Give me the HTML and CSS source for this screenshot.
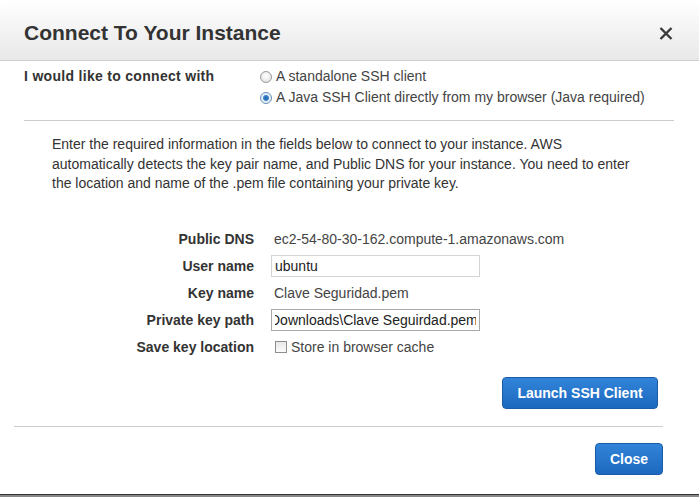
FILE: index.html
```html
<!DOCTYPE html>
<html lang="en">
<head>
    <meta charset="UTF-8">
    <meta name="viewport" content="width=device-width, initial-scale=1.0">
    <title>Connect To Your Instance</title>
    <link rel="stylesheet" href="styles.css">
</head>
<body>
    <div class="modal">
        <div class="modal-header">
            <h1>Connect To Your Instance</h1>
            <button class="close-x" type="button" aria-label="Close">
                <svg width="14" height="13" viewBox="0 0 14 13">
                    <path d="M1.5 1 L12.5 12 M12.5 1 L1.5 12" stroke="#3a3a3a" stroke-width="2.4" fill="none"/>
                </svg>
            </button>
        </div>

        <div class="modal-body">
            <div class="connect-row">
                <div class="connect-label">I would like to connect with</div>
                <div class="connect-options">
                    <label class="radio-line"><input type="radio" name="client"> A standalone SSH client</label>
                    <label class="radio-line"><input type="radio" name="client" checked> A Java SSH Client directly from my browser (Java required)</label>
                </div>
            </div>

            <p class="intro">Enter the required information in the fields below to connect to your instance. AWS automatically detects the key pair name, and Public DNS for your instance. You need to enter the location and name of the .pem file containing your private key.</p>

            <div class="fields">
                <div class="field-label">Public DNS</div>
                <div class="field-value">ec2-54-80-30-162.compute-1.amazonaws.com</div>

                <div class="field-label">User name</div>
                <div><input class="text-input" type="text" value="ubuntu"></div>

                <div class="field-label">Key name</div>
                <div class="field-value">Clave Seguridad.pem</div>

                <div class="field-label">Private key path</div>
                <div><input class="text-input path" type="text" value="Downloads\Clave Seguirdad.pem"></div>

                <div class="field-label">Save key location</div>
                <div class="field-value"><label class="check-line"><input type="checkbox"> Store in browser cache</label></div>
            </div>

            <div class="launch-row">
                <button class="blue-btn launch" type="button">Launch SSH Client</button>
            </div>
        </div>

        <div class="modal-footer">
            <button class="blue-btn" type="button">Close</button>
        </div>
    </div>
    <div class="backdrop"></div>
</body>
</html>
```

FILE: styles.css
```css
html, body {
    margin: 0;
    padding: 0;
    background-color: #fff;
}

body {
    font-family: "Liberation Sans", Arial, sans-serif;
    font-size: 14px;
    color: #333;
}

.modal {
    height: 494px;
    display: flex;
    flex-direction: column;
    background-color: #fff;
    border-radius: 6px 6px 0 0;
    overflow: hidden;
}

.modal-header {
    height: 60px;
    flex: none;
    display: flex;
    align-items: center;
    justify-content: space-between;
    padding: 0 26px 0 24px;
    background: linear-gradient(#ffffff, #e8e8e8);
    border-bottom: 1px solid #cfcfcf;
}

.modal-header h1 {
    margin: 0;
    margin-top: 6px;
    font-size: 21px;
    font-weight: bold;
    color: #333;
}

.close-x {
    border: none;
    background: none;
    padding: 0;
    margin-top: 7px;
    display: flex;
}

.modal-body {
    flex: 1;
    padding: 0 25px 0 24px;
}

.connect-row {
    display: grid;
    grid-template-columns: 236px auto;
    padding: 5px 0 12px;
    border-bottom: 1px solid #cdcdcd;
}

.connect-label {
    font-weight: bold;
    line-height: 21px;
    letter-spacing: 0.3px;
}

.radio-line {
    display: flex;
    align-items: center;
    line-height: 21px;
    color: #444;
}

.radio-line input {
    appearance: none;
    width: 12px;
    height: 12px;
    margin: 0 4px 0 0;
    border: 1px solid #9a9a9a;
    border-radius: 50%;
    background: radial-gradient(circle at 50% 40%, #ffffff, #dcdcdc);
}

.radio-line input:checked {
    background: radial-gradient(circle, #1c5fa8 0, #3d86cf 2.5px, #e6eef6 3.5px, #e6eef6 100%);
    border-color: #6a8fb8;
}

.intro {
    max-width: 590px;
    margin: 14px 0 0 28px;
    line-height: 19.5px;
    color: #333;
}

.fields {
    display: grid;
    grid-template-columns: 230px 209px;
    column-gap: 17px;
    grid-auto-rows: 27px;
    align-items: center;
    margin-top: 32px;
}

.field-label {
    text-align: right;
    font-weight: bold;
    color: #333;
}

.field-value {
    padding-left: 3px;
    white-space: nowrap;
    color: #444;
}

.text-input {
    box-sizing: border-box;
    width: 209px;
    height: 22px;
    padding: 0 3px;
    border: 1px solid #d4d4d4;
    font-family: "Liberation Sans", Arial, sans-serif;
    font-size: 14px;
    color: #222;
    outline: none;
}

.text-input.path {
    border-color: #a8a8a8;
    text-indent: -5px;
}

.check-line {
    display: flex;
    align-items: center;
    color: #444;
}

.check-line input {
    appearance: none;
    width: 12px;
    height: 12px;
    margin: 0 4px 0 1px;
    border: 1px solid #8e8e8e;
    background: linear-gradient(#e8e8e8, #fbfbfb);
}

.launch-row {
    display: flex;
    justify-content: flex-end;
    margin-top: 16px;
    padding-right: 16px;
}

.blue-btn {
    height: 32px;
    padding: 0 14px;
    border: 1px solid #1a5ca6;
    border-radius: 4px;
    background: linear-gradient(#3184d9, #1c68bf);
    color: #fff;
    font-family: "Liberation Sans", Arial, sans-serif;
    font-size: 14px;
    font-weight: bold;
    cursor: pointer;
}

.blue-btn.launch {
    width: 156px;
}

.modal-footer {
    flex: none;
    height: 68px;
    margin: 0 36px 0 14px;
    border-top: 1px solid #cdcdcd;
    display: flex;
    justify-content: flex-end;
    align-items: flex-start;
    padding-top: 16px;
    box-sizing: border-box;
}

.backdrop {
    height: 3px;
    border-top: 1px solid #333;
    background-color: #888;
}
```
